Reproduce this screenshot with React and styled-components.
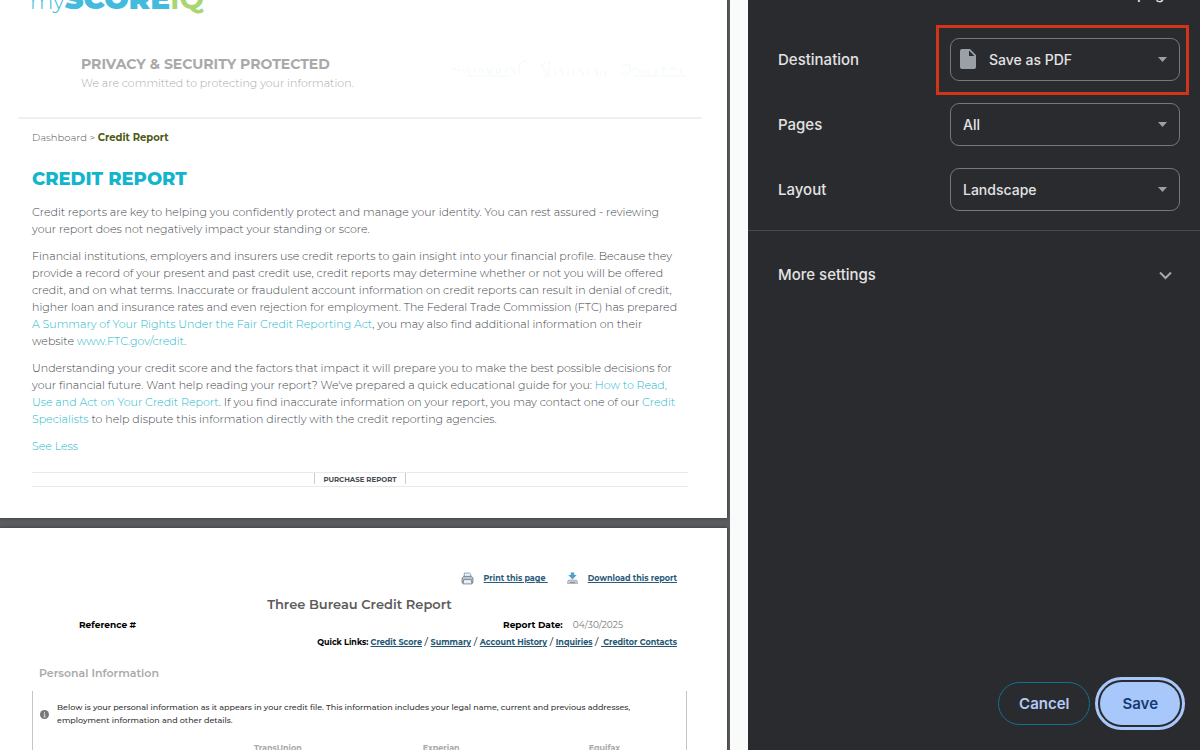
import React from 'react';
import styled, { createGlobalStyle } from 'styled-components';

const GlobalStyle = createGlobalStyle`
  * {
    box-sizing: border-box;
  }

  body {
    margin: 0;
    overflow: hidden;
    font-family: Montserrat, Inter, 'Liberation Sans', sans-serif;
  }

  h1, h2, h3, p {
    margin: 0;
  }
`;

const Dialog = styled.div`
  display: grid;
  grid-template-columns: minmax(0, 1fr) 452px;
  height: 100vh;
  overflow: hidden;
  background: #f9fafa;
`;

/* ---------- Preview ---------- */

const Preview = styled.main`
  margin-right: 18px;
  padding-right: 3px;
  background: #5a5c5f;
  overflow: hidden;
`;

const Sheet = styled.section`
  background: #fff;
  margin-bottom: 10px;
  box-shadow: 0 0 3px #333;
`;

// The preview is scrolled, so the logo hangs over the top edge
const Brand = styled.div`
  display: flex;
  align-items: flex-end;
  height: 22px;
  padding-left: 30px;
  font-size: 29px;
  line-height: 40px;
  color: #42bbdd;
`;

const BrandPart = styled.span`
  font-size: ${({ $small }) => ($small ? 22 : 29)}px;
  font-weight: ${({ $weight }) => $weight};
  color: ${({ $color }) => $color || 'inherit'};
`;

const Security = styled.div`
  display: flex;
  justify-content: space-between;
  align-items: center;
  margin: 0 25px 0 18px;
  padding: 32px 14px 25px 63px;
  border-bottom: 2px solid #f0f0f0;
`;

const SecurityTitle = styled.h2`
  font-size: 14px;
  line-height: 20px;
  font-weight: 700;
  color: #a9a9a9;
`;

const SecurityText = styled.p`
  font-size: 11px;
  line-height: 18px;
  font-weight: 300;
  color: #aaa;
`;

const Article = styled.div`
  padding: 12px 39px 31px 32px;
`;

const Breadcrumb = styled.nav`
  font-size: 10px;
  line-height: 14px;
  font-weight: 300;
  color: #555;

  strong {
    font-weight: 700;
    color: #4e5a14;
  }
`;

const Title = styled.h1`
  margin: 22px 0 13px;
  font-size: 18px;
  line-height: 24px;
  font-weight: 800;
  color: #12b5cb;
`;

const Paragraph = styled.p`
  margin-bottom: 10px;
  font-size: 11px;
  line-height: 17px;
  font-weight: 300;
  color: #40454b;
  white-space: nowrap;
`;

const TextLink = styled.a`
  color: #18b8cc;
  text-decoration: none;
`;

const PurchaseBar = styled.div`
  display: flex;
  justify-content: center;
  margin-top: 17px;
  height: 15px;
  border: solid #e9e9e9;
  border-width: 1px 0;
`;

const PurchaseLink = styled.a`
  height: 11px;
  padding: 0 8px;
  border: solid #ccc;
  border-width: 0 1px;
  font-size: 7px;
  line-height: 13px;
  font-weight: 700;
  color: #444b55;
  text-decoration: none;
`;

/* ---------- Report sheet ---------- */

const Report = styled(Sheet)`
  padding: 42px 40px 0 32px;
`;

const Actions = styled.div`
  display: flex;
  justify-content: flex-end;
  gap: 19px;
  padding-right: 10px;
`;

const Action = styled.a`
  display: flex;
  align-items: center;
  gap: 10px;
  font-size: 8px;
  line-height: 16px;
  font-weight: 700;
  color: #2a5b79;
  text-decoration: underline;
  white-space: pre;
`;

const ReportTitle = styled.h2`
  margin: 8px 0 4px;
  font-size: 13px;
  line-height: 20px;
  font-weight: 600;
  color: #5c5c5c;
  text-align: center;
`;

const Meta = styled.div`
  display: flex;
  justify-content: space-between;
  padding: 0 64px 0 47px;
  font-size: 9px;
  line-height: 14px;
  color: #777;

  strong {
    margin-right: 10px;
    color: #000;
  }
`;

const QuickLinks = styled.nav`
  margin-top: 3px;
  padding-right: 10px;
  font-size: 10px;
  line-height: 14px;
  text-align: right;
  white-space: pre;

  a,
  strong {
    font-size: 8px;
    font-weight: 700;
  }

  a {
    color: #235775;
  }
`;

const SectionTitle = styled.h3`
  margin: 15px 0 9px 7px;
  font-size: 11px;
  line-height: 18px;
  font-weight: 600;
  color: #aaa;
`;

const InfoBox = styled.div`
  border: solid #c4c4c4;
  border-width: 0 1px;
`;

const Notice = styled.div`
  display: flex;
  align-items: center;
  gap: 8px;
  padding: 10px 7px;
  font-size: 8px;
  line-height: 13px;
  font-weight: 500;
  color: #333;
  white-space: nowrap;

  svg {
    flex-shrink: 0;
  }
`;

const Bureaus = styled.table`
  width: 100%;
  table-layout: fixed;
  border-collapse: collapse;

  th {
    padding: 3px 0;
    font-size: 8px;
    line-height: 16px;
    font-weight: 700;
    color: #aaa;
  }
`;

/* ---------- Settings ---------- */

const Sidebar = styled.aside`
  display: flex;
  flex-direction: column;
  min-height: 0;
  background: #2a2b2f;
  color: #e3e3e3;
  font-family: Inter, 'Liberation Sans', sans-serif;
  font-size: 15px;
  font-weight: 500;
`;

const SidebarHead = styled.header`
  display: flex;
  justify-content: flex-end;
  align-items: flex-end;
  height: 4px;
  padding-right: 27px;
  line-height: 20px;
`;

const Fields = styled.div`
  display: flex;
  flex-direction: column;
  gap: 22px;
  padding: 34px 20px 19px 30px;
  border-bottom: 1px solid #47484c;
`;

const Field = styled.div`
  display: flex;
  justify-content: space-between;
  align-items: center;
`;

const SelectBox = styled.div`
  position: relative;
  width: 230px;
  color: #9aa0a6;

  &::before {
    content: '';
    display: ${({ $marked }) => ($marked ? 'block' : 'none')};
    position: absolute;
    inset: -13px -9px -14px -14px;
    border: 3px solid #d13418;
    pointer-events: none;
  }

  svg {
    position: absolute;
    pointer-events: none;
  }
`;

const Select = styled.select`
  display: block;
  appearance: none;
  width: 100%;
  height: 43px;
  padding: 0 32px 0 ${({ $icon }) => ($icon ? 38 : 12)}px;
  border: 1px solid #75777b;
  border-radius: 9px;
  background: transparent;
  color: #e3e3e3;
  font: 500 14px Inter, 'Liberation Sans', sans-serif;
`;

const FileIcon = styled.svg`
  top: 11px;
  left: 10px;
`;

const Caret = styled.svg`
  top: 19px;
  right: 12px;
`;

const More = styled.button`
  display: flex;
  justify-content: space-between;
  align-items: center;
  padding: 32px 28px 32px 30px;
  border: 0;
  background: none;
  color: inherit;
  font: inherit;
  line-height: 24px;
  text-align: left;
`;

const Footer = styled.footer`
  display: flex;
  justify-content: flex-end;
  gap: 10px;
  margin-top: auto;
  padding: 0 20px 25px;
`;

const Button = styled.button`
  height: 43px;
  padding: 0 ${({ $primary }) => ($primary ? 22 : 20)}px;
  border: ${({ $primary }) => ($primary ? '0' : '1px solid #12728f')};
  border-radius: 22px;
  background: ${({ $primary }) => ($primary ? '#a8c7fa' : 'transparent')};
  color: ${({ $primary }) => ($primary ? '#153a75' : '#b3cbf7')};
  font: 600 15px Inter, 'Liberation Sans', sans-serif;
  outline: ${({ $primary }) => ($primary ? '3px solid #a8c7fa' : 'none')};
  outline-offset: 2px;
`;

const settings = [
  { id: 'destination', label: 'Destination', value: 'Save as PDF', icon: true, marked: true },
  { id: 'pages', label: 'Pages', value: 'All' },
  { id: 'layout', label: 'Layout', value: 'Landscape' },
];

const TrustSeals = () => (
  <svg width="240" height="26" fill="none" stroke="#f1f9f7" strokeWidth="1" aria-hidden="true">
    <path d="M4 8l8 3m4-2v5m5-6q-3 4 2 6m4-6v6m4-5q4-2 3 5m5-6l3 6 3-6m4 5q5-1 3-5-5 0-3 5m9-5v6m4-6q5 0 5 6m4 0v-9q3-5 8-4M18 16h44" />
    <path d="M98 3q-7 1-3 6 8 5 1 8M101 1v17m6-8v6m4-6q4-2 4 6m5-6v6m5-7v7m5-6q5-2 5 6m5-6v6m5-6q5-1 4 6m4-6v6m5-6l-1 8" />
    <path d="M174 5h7q4 6-2 9h-6m11-4q8-4 8 4m4-5v5m5-5q-4 5 1 5m6-6v6m5-6h5m-3-2v8m6-5h8m4 0v5m-48 2h54" />
  </svg>
);

const PrinterIcon = () => (
  <svg width="13" height="13" viewBox="0 0 12 12" aria-hidden="true">
    <path d="M3 5V1h5l1 1v3" fill="#eef6fc" stroke="#7899b0" strokeWidth=".8" />
    <path d="M1 5.5L2.5 4h7L11 5.5V10H1z" fill="#bcc5cf" stroke="#6d7884" strokeWidth=".8" />
    <path d="M2.5 7h7l.7 4H1.8z" fill="#e6f1fa" stroke="#63707c" strokeWidth=".7" />
  </svg>
);

const DownloadIcon = () => (
  <svg width="11" height="12" viewBox="0 0 11 12" aria-hidden="true">
    <path d="M1.5 8h8l1 2v1.500H.5V10z" fill="#c5c9cd" stroke="#959ca3" strokeWidth=".6" />
    <path d="M3.800 .5h3.400V3h2.500L5.500 7.500 1.300 3h2.500z" fill="#4f9fd2" />
    <path d="M3 10.500h5" stroke="#777" strokeWidth=".7" />
  </svg>
);

const InfoIcon = () => (
  <svg width="9" height="9" viewBox="0 0 10 10" aria-hidden="true">
    <circle cx="5" cy="5" r="5" fill="#777" />
    <path d="M5 2v1.300M4 4.300h1.200V7.500M3.800 7.600h2.600" stroke="#ddd" strokeWidth="1.100" fill="none" />
  </svg>
);

const CreditReport = () => (
  <Sheet>
    <Brand>
      <div>
        <BrandPart $weight={300} $small>my</BrandPart>
        <BrandPart $weight={900}>SCORE</BrandPart>
        <BrandPart $weight={700} $color="#a8d672">IQ</BrandPart>
      </div>
    </Brand>
    <Security>
      <div>
        <SecurityTitle>PRIVACY &amp; SECURITY PROTECTED</SecurityTitle>
        <SecurityText>We are committed to protecting your information.</SecurityText>
      </div>
      <TrustSeals />
    </Security>
    <Article>
      <Breadcrumb>
        Dashboard &gt; <strong>Credit Report</strong>
      </Breadcrumb>
      <Title>CREDIT REPORT</Title>
      <Paragraph>
        Credit reports are key to helping you confidently protect and manage your identity. You can rest assured - reviewing<br />
        your report does not negatively impact your standing or score.
      </Paragraph>
      <Paragraph>
        Financial institutions, employers and insurers use credit reports to gain insight into your financial profile. Because they<br />
        provide a record of your present and past credit use, credit reports may determine whether or not you will be offered<br />
        credit, and on what terms. Inaccurate or fraudulent account information on credit reports can result in denial of credit,<br />
        higher loan and insurance rates and even rejection for employment. The Federal Trade Commission (FTC) has prepared<br />
        <TextLink href="#rights">A Summary of Your Rights Under the Fair Credit Reporting Act</TextLink>, you may also find additional information on their<br />
        website <TextLink href="#ftc">www.FTC.gov/credit</TextLink>.
      </Paragraph>
      <Paragraph>
        Understanding your credit score and the factors that impact it will prepare you to make the best possible decisions for<br />
        your financial future. Want help reading your report? We've prepared a quick educational guide for you: <TextLink href="#guide">How to Read,<br />
        Use and Act on Your Credit Report</TextLink>. If you find inaccurate information on your report, you may contact one of our <TextLink href="#specialists">Credit<br />
        Specialists</TextLink> to help dispute this information directly with the credit reporting agencies.
      </Paragraph>
      <Paragraph>
        <TextLink href="#less">See Less</TextLink>
      </Paragraph>
      <PurchaseBar>
        <PurchaseLink href="#purchase">PURCHASE REPORT</PurchaseLink>
      </PurchaseBar>
    </Article>
  </Sheet>
);

const BureauReport = () => (
  <Report>
    <Actions>
      <Action href="#print"><PrinterIcon />{'Print this page '}</Action>
      <Action href="#download"><DownloadIcon />Download this report</Action>
    </Actions>
    <ReportTitle>Three Bureau Credit Report</ReportTitle>
    <Meta>
      <strong>Reference #</strong>
      <span><strong>Report Date:</strong>04/30/2025</span>
    </Meta>
    <QuickLinks>
      <strong>Quick Links: </strong>
      <a href="#score">Credit Score</a> / <a href="#summary">Summary</a> / <a href="#history">Account History</a> / <a href="#inquiries">Inquiries</a> / <a href="#contacts">{' Creditor Contacts'}</a>
    </QuickLinks>
    <SectionTitle>Personal Information</SectionTitle>
    <InfoBox>
      <Notice>
        <InfoIcon />
        <p>
          Below is your personal information as it appears in your credit file. This information includes your legal name, current and previous addresses,<br />
          employment information and other details.
        </p>
      </Notice>
      <Bureaus>
        <thead>
          <tr>
            <td />
            <th scope="col">TransUnion</th>
            <th scope="col">Experian</th>
            <th scope="col">Equifax</th>
          </tr>
        </thead>
      </Bureaus>
    </InfoBox>
  </Report>
);

const App = () => {
  return (
    <>
      <GlobalStyle />
      <Dialog>
        <Preview>
          <CreditReport />
          <BureauReport />
        </Preview>
        <Sidebar>
          <SidebarHead>1 page</SidebarHead>
          <Fields>
            {settings.map(({ id, label, value, icon, marked }) => (
              <Field key={id}>
                <label htmlFor={id}>{label}</label>
                <SelectBox $marked={marked}>
                  <Select id={id} $icon={icon}>
                    <option>{value}</option>
                  </Select>
                  {icon && (
                    <FileIcon width="16" height="20" viewBox="0 0 16 20" aria-hidden="true">
                      <path d="M2 0h8l6 6v12a2 2 0 0 1-2 2H2a2 2 0 0 1-2-2V2a2 2 0 0 1 2-2zm7 1.500V7h5.500z" fill="currentColor" />
                    </FileIcon>
                  )}
                  <Caret width="10" height="5" viewBox="0 0 10 5" aria-hidden="true">
                    <path d="M0 0h9L4.500 5z" fill="currentColor" />
                  </Caret>
                </SelectBox>
              </Field>
            ))}
          </Fields>
          <More type="button">
            More settings
            <svg width="13" height="9" viewBox="0 0 13 9" fill="none" stroke="#a5a9ae" strokeWidth="2" aria-hidden="true">
              <path d="M1 1.500l5.500 5.500L12 1.500" />
            </svg>
          </More>
          <Footer>
            <Button type="button">Cancel</Button>
            <Button type="button" $primary>Save</Button>
          </Footer>
        </Sidebar>
      </Dialog>
    </>
  );
};

export default App;
